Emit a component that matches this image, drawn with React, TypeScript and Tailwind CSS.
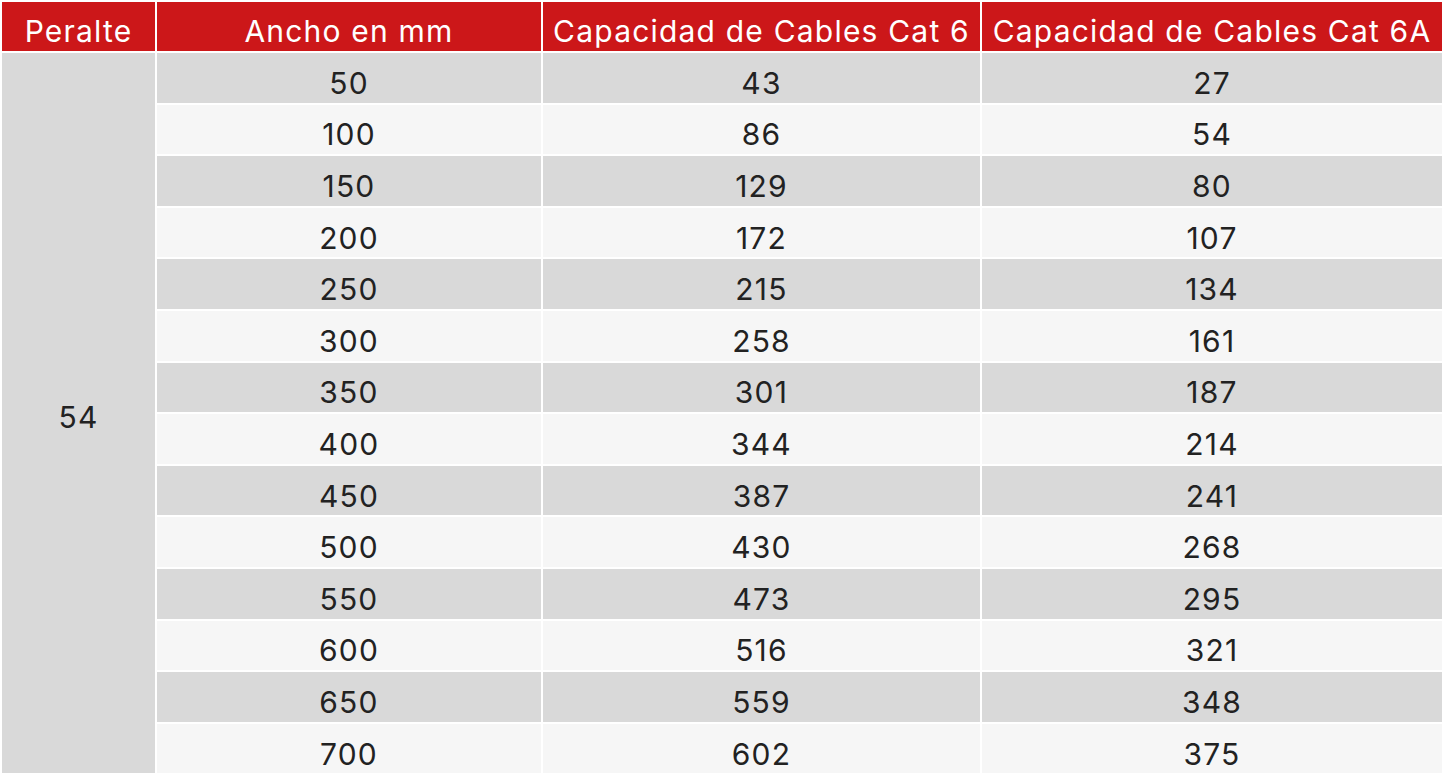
const ROWS: [number, number, number][] = [
  [50, 43, 27],
  [100, 86, 54],
  [150, 129, 80],
  [200, 172, 107],
  [250, 215, 134],
  [300, 258, 161],
  [350, 301, 187],
  [400, 344, 214],
  [450, 387, 241],
  [500, 430, 268],
  [550, 473, 295],
  [600, 516, 321],
  [650, 559, 348],
  [700, 602, 375],
];

export default function App() {
  return (
    <div className="w-[1444px] h-[775px] bg-white font-['Inter',sans-serif] text-[#222222]">
      <table className="w-full table-fixed border-separate border-spacing-[2px] text-center text-[30px] tracking-[1.2px] font-normal">
        <colgroup>
          <col className="w-[153px]" />
          <col className="w-[384px]" />
          <col className="w-[437px]" />
          <col />
        </colgroup>
        <thead>
          <tr className="h-[49px] bg-[#cc1719] text-white">
            <th className="font-normal leading-none pt-[9px] p-0">Peralte</th>
            <th className="font-normal leading-none pt-[9px] p-0">Ancho en mm</th>
            <th className="font-normal leading-none pt-[9px] p-0 whitespace-nowrap">Capacidad de Cables Cat 6</th>
            <th className="font-normal leading-none pt-[9px] p-0 whitespace-nowrap">Capacidad de Cables Cat 6A</th>
          </tr>
        </thead>
        <tbody>
          {ROWS.map((row, i) => (
            <tr key={row[0]} className={i % 2 === 0 ? 'h-[49.6px] bg-[#d9d9d9]' : 'h-[49.6px] bg-[#f6f6f6]'}>
              {i === 0 ? (
                <td rowSpan={ROWS.length} className="bg-[#d9d9d9] leading-none pt-[8px]">
                  54
                </td>
              ) : null}
              <td className="leading-none pt-[10px]">{row[0]}</td>
              <td className="leading-none pt-[10px]">{row[1]}</td>
              <td className="leading-none pt-[10px]">{row[2]}</td>
            </tr>
          ))}
        </tbody>
      </table>
    </div>
  );
}
